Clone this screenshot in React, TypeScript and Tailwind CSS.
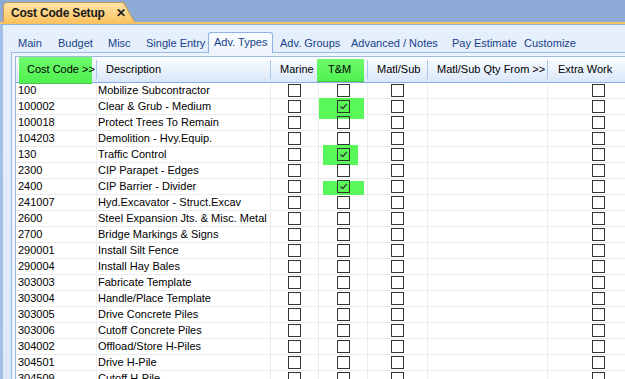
import React from "react";

type Row = { code: string; desc: string; tm?: { l: number; t: number; w: number; h: number } };

const rows: Row[] = [
      { code: "100", desc: "Mobilize Subcontractor" },
      { code: "100002", desc: "Clear & Grub - Medium", tm: { l: 0, t: -1, w: 45, h: 21 } },
      { code: "100018", desc: "Protect Trees To Remain" },
      { code: "104203", desc: "Demolition - Hvy.Equip." },
      { code: "130", desc: "Traffic Control", tm: { l: 4, t: -2, w: 35, h: 20 } },
      { code: "2300", desc: "CIP Parapet - Edges" },
      { code: "2400", desc: "CIP Barrier - Divider", tm: { l: 4, t: 2, w: 41, h: 14 } },
      { code: "241007", desc: "Hyd.Excavator - Struct.Excav" },
      { code: "2600", desc: "Steel Expansion Jts. & Misc. Metal" },
      { code: "2700", desc: "Bridge Markings & Signs" },
      { code: "290001", desc: "Install Silt Fence" },
      { code: "290004", desc: "Install Hay Bales" },
      { code: "303003", desc: "Fabricate Template" },
      { code: "303004", desc: "Handle/Place Template" },
      { code: "303005", desc: "Drive Concrete Piles" },
      { code: "303006", desc: "Cutoff Concrete Piles" },
      { code: "304002", desc: "Offload/Store H-Piles" },
      { code: "304501", desc: "Drive H-Pile" },
      { code: "304509", desc: "Cutoff H-Pile" },
];

const tabs = [
      { label: "Main", w: "w-[40px]" },
      { label: "Budget", w: "w-[50px]" },
      { label: "Misc", w: "w-[38px]" },
      { label: "Single Entry", w: "w-[67px]" },
      { label: "Adv. Types", w: "w-[65px]", active: true },
      { label: "Adv. Groups", w: "w-[71px] ml-[2px]" },
      { label: "Advanced / Notes", w: "w-[101px]" },
      { label: "Pay Estimate", w: "w-[72px]" },
      { label: "Customize", w: "w-[60px]" },
];

const CheckBox = ({ checked }: { checked?: boolean }) => (
      <div className="relative z-10 flex h-[13px] w-[13px] shrink-0 items-center justify-center border-[1.5px] border-[#333]">
            {checked && (
                  <svg width="9" height="9" viewBox="0 0 9 9">
                        <path d="M1.5 4.5 L3.6 6.6 L7.6 2.2" fill="none" stroke="#2e3b2e" strokeWidth="1.4" />
                  </svg>
            )}
      </div>
);

const HeadCell = ({ w, children }: { w: string; children?: React.ReactNode }) => (
      <div className={`${w} relative flex h-full shrink-0 items-center`}>
            <div className="relative z-10 flex-1 overflow-hidden whitespace-nowrap pl-[9px]">{children}</div>
            <div className="h-[19px] w-px shrink-0 bg-[#a9c5ec]" />
      </div>
);

export default function App() {
      return (
            <div className="flex h-[379px] w-[625px] flex-col overflow-hidden bg-[#8dabd6] font-['Liberation_Sans',Arial,sans-serif] text-[11px] text-black">
                  {/* document tab */}
                  <div className="flex h-[22px] shrink-0 items-end pl-[3px]">
                        <div className="relative h-[20px] w-[132px] shrink-0 bg-[#c99b52] [clip-path:polygon(0_100%,0_3px,3px_0,calc(100%-11px)_0,100%_100%)]">
                              <div className="absolute inset-x-[1px] top-[1px] bottom-0 flex items-center whitespace-nowrap bg-gradient-to-b from-[#ffe4a6] to-[#fcc462] pl-[7px] [clip-path:polygon(0_100%,0_2px,2px_0,calc(100%-11px)_0,100%_100%)]">
                                    <span className="text-[12px] font-bold tracking-[-0.2px] text-[#1a1a1a]">Cost Code Setup</span>
                                    <span className="ml-[11px] text-[12px] font-bold text-[#222]">✕</span>
                              </div>
                        </div>
                  </div>
                  <div className="h-[2px] shrink-0 bg-[#f8c35f]" />

                  <div className="flex flex-1 flex-col border-l-[3px] border-t border-l-[#a3bfe6] border-t-[#8fb0dc] bg-gradient-to-b from-[#e6effc] to-[#dce8f8] pl-[8px]">
                        {/* tab strip */}
                        <div className="flex h-[27px] shrink-0 items-end pl-[2px]">
                              {tabs.map((t) => (
                                    <div
                                          key={t.label}
                                          className={`${t.w} flex h-[20px] shrink-0 items-center whitespace-nowrap pl-[5px] text-[#15428b] ${t.active ? "relative z-10 -mb-px h-[21px] rounded-t-[3px] border border-b-0 border-[#8db2e3] bg-gradient-to-b from-[#fafcff] to-[#eef4fd] pb-[2px] pl-[4px]" : "pt-[2px]"}`}
                                    >
                                          {t.label}
                                    </div>
                              ))}
                        </div>

                        {/* panel */}
                        <div className="flex-1 border-l border-t border-[#99bbe8] bg-[#eef4fc] pl-[3px] pt-[3px]">
                              <div className="w-[634px] border-l border-t border-[#9eb9dc] bg-white">
                                    {/* header */}
                                    <div className="flex h-[26px] border-b border-[#86aee6] bg-gradient-to-b from-[#fbfdff] to-[#dae7f9]">
                                          <div className="relative flex h-full w-[81px] shrink-0 items-center">
                                                <div className="absolute left-[3px] top-0 z-0 h-[27px] w-[73px] border-b border-[#49c949] bg-gradient-to-b from-[#6efb6e] to-[#4ff04f]" />
                                                <div className="relative z-10 flex-1 whitespace-nowrap pl-[11px]">Cost Code &gt;&gt;</div>
                                                <div className="h-[19px] w-px shrink-0 bg-[#a9c5ec]" />
                                          </div>
                                          <HeadCell w="w-[174px]">Description</HeadCell>
                                          <HeadCell w="w-[48px]">Marine</HeadCell>
                                          <div className="relative flex h-full w-[49px] shrink-0 items-center">
                                                <div className="absolute left-[-2px] top-[2px] z-0 h-[23px] w-[47px] border-b border-[#49c949] bg-gradient-to-b from-[#6efb6e] to-[#4ff04f]" />
                                                <div className="relative z-10 flex-1 pl-[9px]">T&amp;M</div>
                                                <div className="h-[19px] w-px shrink-0 bg-[#a9c5ec]" />
                                          </div>
                                          <HeadCell w="w-[60px]">Matl/Sub</HeadCell>
                                          <HeadCell w="w-[120px]">Matl/Sub Qty From &gt;&gt;</HeadCell>
                                          <div className="flex h-full w-[101px] shrink-0 items-center whitespace-nowrap pl-[10px]">Extra Work</div>
                                    </div>

                                    {/* rows */}
                                    {rows.map((r) => (
                                          <div key={r.code} className="flex h-[16px] border-b border-[#ececec]">
                                                <div className="flex w-[81px] shrink-0 items-center border-r border-[#ececec] pl-[2px]">{r.code}</div>
                                                <div className="flex w-[174px] shrink-0 items-center overflow-hidden whitespace-nowrap border-r border-[#ececec] pl-[1px]">{r.desc}</div>
                                                <div className="flex w-[48px] shrink-0 items-center justify-center border-r border-[#ececec]">
                                                      <CheckBox />
                                                </div>
                                                <div className="relative flex w-[49px] shrink-0 items-center justify-center border-r border-[#ececec]">
                                                      {r.tm && (
                                                            <div
                                                                  className="absolute z-0 bg-[#58f858]"
                                                                  style={{ left: r.tm.l, top: r.tm.t, width: r.tm.w, height: r.tm.h }}
                                                            />
                                                      )}
                                                      <CheckBox checked={!!r.tm} />
                                                </div>
                                                <div className="flex w-[60px] shrink-0 items-center justify-center border-r border-[#ececec]">
                                                      <CheckBox />
                                                </div>
                                                <div className="w-[120px] shrink-0 border-r border-[#ececec]" />
                                                <div className="flex w-[101px] shrink-0 items-center justify-center">
                                                      <CheckBox />
                                                </div>
                                          </div>
                                    ))}
                              </div>
                        </div>
                  </div>
            </div>
      );
}
